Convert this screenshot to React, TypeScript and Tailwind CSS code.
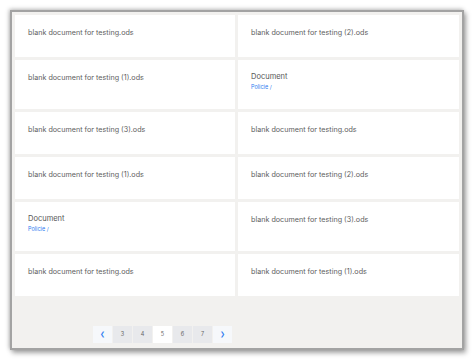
type Item = { title: string; sub?: string };

const items: [Item, Item][] = [
  [{ title: "blank document for testing.ods" }, { title: "blank document for testing (2).ods" }],
  [{ title: "blank document for testing (1).ods" }, { title: "Document", sub: "Policie /" }],
  [{ title: "blank document for testing (3).ods" }, { title: "blank document for testing.ods" }],
  [{ title: "blank document for testing (1).ods" }, { title: "blank document for testing (2).ods" }],
  [{ title: "Document", sub: "Policie /" }, { title: "blank document for testing (3).ods" }],
  [{ title: "blank document for testing.ods" }, { title: "blank document for testing (1).ods" }],
];

function Card({ item, tall }: { item: Item; tall: boolean }) {
  return (
    <div className={`bg-white pl-[13px] ${tall ? "h-[49px]" : "h-[42px]"} ${item.sub ? "pt-[12px]" : "pt-[13px]"}`}>
      {item.sub ? (
        <>
          <div className="text-[7.5px] leading-[10px] text-[#555555]">{item.title}</div>
          <div className="text-[5.5px] leading-[10px] text-[#2f7cf0]">{item.sub}</div>
        </>
      ) : (
        <div className="text-[7.2px] leading-[10px] text-[#5e5e5e]">{item.title}</div>
      )}
    </div>
  );
}

export default function App() {
  return (
    <div className="w-[475px] h-[359px] bg-white pt-[10px] pl-[10px]" style={{ fontFamily: "Inter, 'Open Sans', sans-serif" }}>
      {/* Framed screenshot */}
      <div className="w-[454px] h-[340px] border-2 border-[#a3a3a3] bg-[#f2f1ef] shadow-[2px_3px_5px_rgba(0,0,0,0.35),-1px_-1px_4px_rgba(0,0,0,0.25)] flex flex-col">
        <div className="px-[3px] pt-[3px] flex flex-col gap-[3px]">
          {items.map((pair, i) => {
            const tall = !!(pair[0].sub || pair[1].sub);
            return (
              <div key={i} className="grid grid-cols-[220px_221px] gap-[3px]">
                <Card item={pair[0]} tall={tall} />
                <Card item={pair[1]} tall={tall} />
              </div>
            );
          })}
        </div>

        {/* Pagination */}
        <div className="mt-[30px] ml-[81px] flex gap-[1px] text-[5.5px] text-[#666]">
          <div className="w-[19px] h-[17px] bg-[#f6f8fb] flex items-center justify-center text-[#2f7cf0] text-[5.5px]">❮</div>
          {["3", "4", "5", "6", "7"].map((n) => (
            <div
              key={n}
              className={`w-[19px] h-[17px] flex items-center justify-center ${n === "5" ? "bg-white" : "bg-[#e8e9ec]"}`}
            >
              {n}
            </div>
          ))}
          <div className="w-[19px] h-[17px] bg-[#f6f8fb] flex items-center justify-center text-[#2f7cf0] text-[5.5px]">❯</div>
        </div>
      </div>
    </div>
  );
}
